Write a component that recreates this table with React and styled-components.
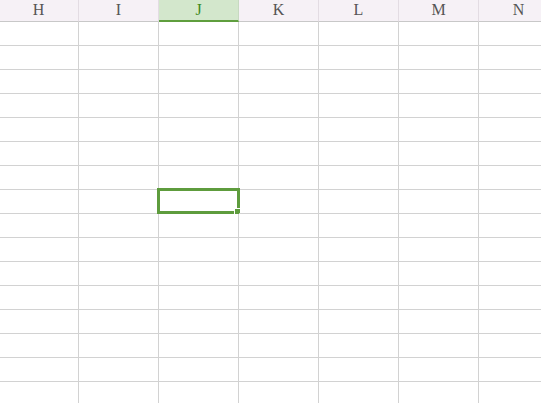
import React from 'react';
import styled, {createGlobalStyle} from 'styled-components';

const GlobalStyle = createGlobalStyle`
  html, body {
    margin: 0;
    padding: 0;
    background: #ffffff;
  }
`;

const Viewport = styled.div`
  width: 541px;
  height: 403px;
  overflow: hidden;
  background: #ffffff;
`;

const Sheet = styled.div`
  display: grid;
  grid-template-columns: repeat(${props => props.cols}, 80px);
  grid-auto-rows: 24px;
  grid-template-rows: 22px;
  margin-left: -1px;
  width: max-content;
`;

const HeaderCell = styled.div`
  display: flex;
  align-items: center;
  justify-content: center;
  box-sizing: border-box;
  padding-bottom: 1px;
  font-family: 'Liberation Serif', 'DejaVu Serif', serif;
  font-size: 16px;
  color: ${props => (props.active ? '#3f8a24' : '#555555')};
  background: ${props => (props.active ? '#d3e7cc' : '#f6f1f6')};
  border-right: 1px solid ${props => (props.active ? '#c7d9c1' : '#e3dce3')};
  border-bottom: ${props => (props.active ? '2px solid #5f9e3e' : '1px solid #c8c8c8')};
`;

const Cell = styled.div`
  position: relative;
  box-sizing: border-box;
  border-right: 1px solid #d2d2d2;
  border-bottom: 1px solid #d2d2d2;
`;

const Selection = styled.div`
  position: absolute;
  left: -2px;
  top: -2px;
  right: -2px;
  bottom: -1px;
  border: 3px solid #5e9c3d;
  pointer-events: none;
`;

const FillHandle = styled.div`
  position: absolute;
  right: -4px;
  bottom: -4px;
  width: 5px;
  height: 5px;
  background: #5e9c3d;
  border: 1px solid #ffffff;
`;

const columns = ['H', 'I', 'J', 'K', 'L', 'M', 'N'];
const rowCount = 16;
const activeCol = 'J';
const activeRow = 7;

function App() {
  return (
    <>
      <GlobalStyle />
      <Viewport>
        <Sheet cols={columns.length}>
          {columns.map(col => (
            <HeaderCell key={col} active={col === activeCol}>
              {col}
            </HeaderCell>
          ))}
          {Array.from({length: rowCount}).map((_, r) =>
            columns.map(col => (
              <Cell key={col + r}>
                {col === activeCol && r === activeRow && (
                  <Selection>
                    <FillHandle />
                  </Selection>
                )}
              </Cell>
            )),
          )}
        </Sheet>
      </Viewport>
    </>
  );
}

export default App;
